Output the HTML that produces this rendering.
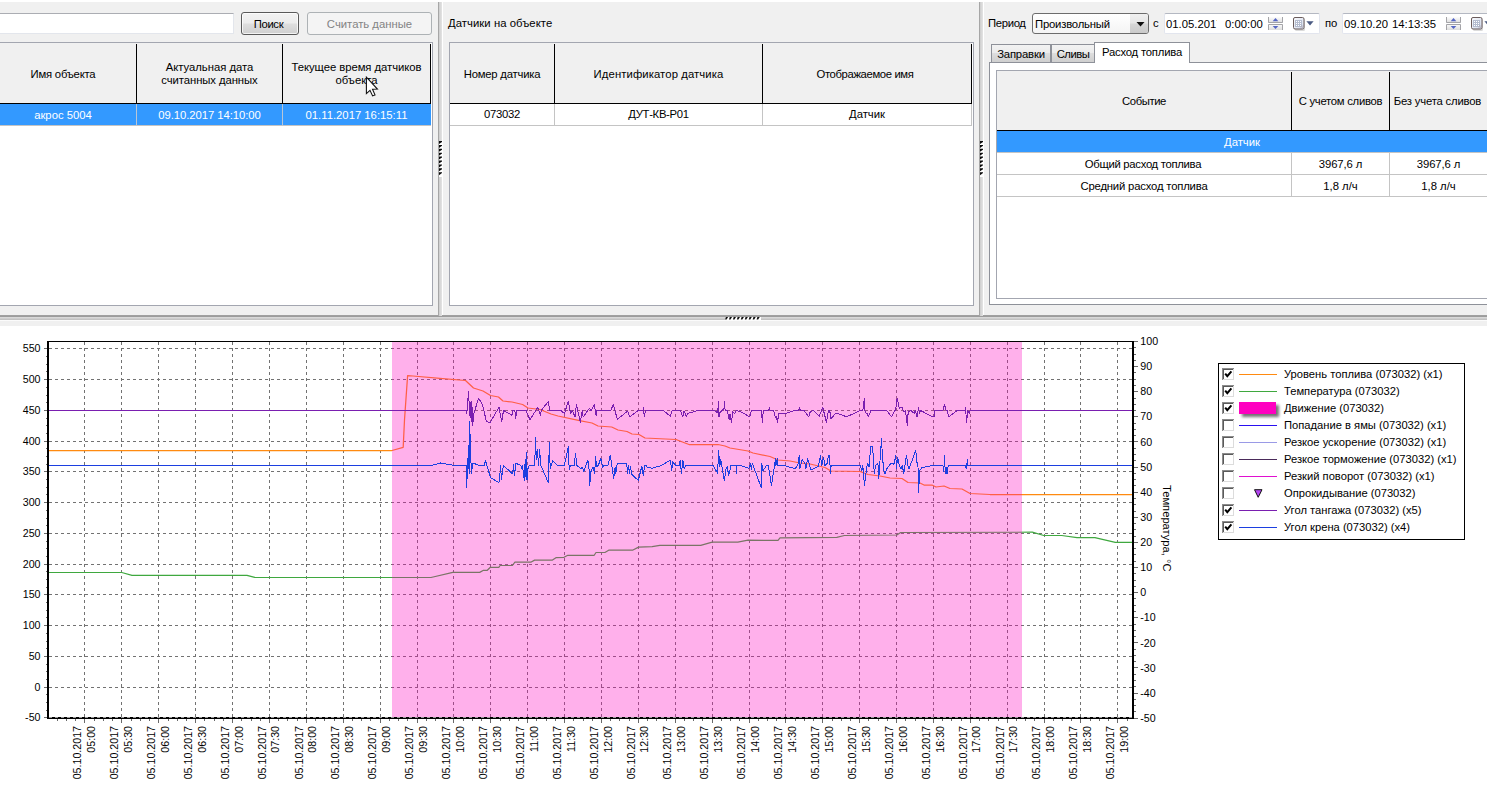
<!DOCTYPE html>
<html lang="ru"><head><meta charset="utf-8"><title>UI</title>
<style>
html,body{margin:0;padding:0;background:#fff;}
body{width:1487px;height:786px;position:relative;overflow:hidden;font-family:"Liberation Sans",sans-serif;font-size:11.3px;color:#000;}
.abs{position:absolute;}
.t{position:absolute;white-space:nowrap;line-height:14px;}
.c{text-align:center;}
#top{position:absolute;left:0;top:2px;width:1487px;height:324px;background:#f0f0f0;}
.frame{position:absolute;background:#fff;border:1px solid #a3a6b0;box-sizing:border-box;}
.hdr{position:absolute;background:#f0f0f0;}
.bk{position:absolute;background:#000;}
.gl{position:absolute;background:#c4c4c4;}
.sel{position:absolute;background:#3399ff;}
.w{color:#fff;}
.inp{position:absolute;background:#fff;box-sizing:border-box;border:1px solid #e3e6ec;border-top-color:#abadb3;}
.btn{position:absolute;box-sizing:border-box;border-radius:3px;text-align:center;}
</style></head>
<body>
<div id="top"></div>
<div class="inp" style="left:-2px;top:13px;width:236px;height:21px;"></div>
<div class="btn" style="left:241px;top:12px;width:58px;height:23px;border:1px solid #5a5a5a;background:linear-gradient(#f3f3f3 0%,#ececec 48%,#dedede 52%,#cfcfcf 100%);box-shadow:inset 0 0 0 1px rgba(255,255,255,.75);line-height:22px;padding-right:3px;letter-spacing:-0.360px;">Поиск</div>
<div class="btn" style="left:307px;top:12px;width:125px;height:23px;border:1px solid #adb2b5;background:#f4f4f4;color:#838383;line-height:22px;">Считать данные</div>
<div class="frame" style="left:-2px;top:42px;width:435px;height:264px;"></div>
<div class="hdr" style="left:0px;top:43px;width:431px;height:60px;"></div>
<div class="bk" style="left:0px;top:103px;width:431px;height:1px;"></div>
<div class="bk" style="left:136px;top:44px;width:1px;height:60px;"></div>
<div class="bk" style="left:282px;top:44px;width:1px;height:60px;"></div>
<div class="bk" style="left:430px;top:44px;width:1px;height:60px;"></div>
<div class="sel" style="left:0px;top:104px;width:431px;height:21px;"></div>
<div class="gl" style="left:0px;top:125px;width:431px;height:1px;"></div>
<div class="gl" style="left:136px;top:104px;width:1px;height:22px;background:#b9c6d6;"></div>
<div class="gl" style="left:282px;top:104px;width:1px;height:22px;background:#b9c6d6;"></div>
<div class="t c " style="left:0px;top:67px;width:126px;letter-spacing:-0.227px;">Имя объекта</div>
<div class="t c " style="left:137px;top:60px;width:145px;letter-spacing:-0.027px;">Актуальная дата</div>
<div class="t c " style="left:137px;top:73px;width:145px;letter-spacing:-0.081px;">считанных данных</div>
<div class="t c " style="left:283px;top:60px;width:147px;letter-spacing:-0.050px;">Текущее время датчиков</div>
<div class="t c " style="left:283px;top:73px;width:147px;">объекта</div>
<div class="t c w" style="left:0px;top:108px;width:126px;">акрос 5004</div>
<div class="t c w" style="left:137px;top:108px;width:145px;letter-spacing:-0.068px;">09.10.2017 14:10:00</div>
<div class="t c w" style="left:283px;top:108px;width:147px;">01.11.2017 16:15:11</div>
<div class="abs" style="left:438px;top:2px;width:1px;height:314px;background:#a6a6a6;"></div>
<div class="abs" style="left:439px;top:2px;width:3px;height:314px;background:linear-gradient(90deg,#cecece,#e4e4e4);"></div>
<div class="abs" style="left:442px;top:2px;width:1px;height:313px;background:#fff;"></div>
<div class="abs" style="left:979px;top:2px;width:1px;height:314px;background:#a6a6a6;"></div>
<div class="abs" style="left:980px;top:2px;width:3px;height:314px;background:linear-gradient(90deg,#cecece,#e4e4e4);"></div>
<div class="abs" style="left:983px;top:2px;width:1px;height:313px;background:#fff;"></div>
<div class="abs" style="left:0px;top:315px;width:438px;height:1px;background:#a0a0a0;"></div>
<div class="abs" style="left:442px;top:315px;width:537px;height:1px;background:#a0a0a0;"></div>
<div class="abs" style="left:983px;top:315px;width:504px;height:1px;background:#a0a0a0;"></div>
<div class="abs" style="left:0px;top:316px;width:1487px;height:1px;background:#9c9c9c;"></div>
<div class="abs" style="left:0px;top:317px;width:1487px;height:3px;background:linear-gradient(#dedede,#bcbcbc);"></div>
<div class="abs" style="left:0px;top:320px;width:1487px;height:1px;background:#fbfbfb;"></div>
<div class="abs" style="left:725px;top:317px;width:36px;height:3px;background:#fff;"></div>
<svg class="abs" style="left:439px;top:141px" width="3" height="36" viewBox="0 0 3 36"><rect width="3" height="36" fill="#fff"/><g fill="#0a0a0a"><path d="M0 0.00 h3 v0.9 l-3 2.1 z"/><path d="M0 3.90 h3 v0.9 l-3 2.1 z"/><path d="M0 7.80 h3 v0.9 l-3 2.1 z"/><path d="M0 11.70 h3 v0.9 l-3 2.1 z"/><path d="M0 15.60 h3 v0.9 l-3 2.1 z"/><path d="M0 19.50 h3 v0.9 l-3 2.1 z"/><path d="M0 23.40 h3 v0.9 l-3 2.1 z"/><path d="M0 27.30 h3 v0.9 l-3 2.1 z"/><path d="M0 31.20 h3 v0.9 l-3 2.1 z"/></g></svg>
<svg class="abs" style="left:980px;top:141px" width="3" height="36" viewBox="0 0 3 36"><rect width="3" height="36" fill="#fff"/><g fill="#0a0a0a"><path d="M0 0.00 h3 v0.9 l-3 2.1 z"/><path d="M0 3.90 h3 v0.9 l-3 2.1 z"/><path d="M0 7.80 h3 v0.9 l-3 2.1 z"/><path d="M0 11.70 h3 v0.9 l-3 2.1 z"/><path d="M0 15.60 h3 v0.9 l-3 2.1 z"/><path d="M0 19.50 h3 v0.9 l-3 2.1 z"/><path d="M0 23.40 h3 v0.9 l-3 2.1 z"/><path d="M0 27.30 h3 v0.9 l-3 2.1 z"/><path d="M0 31.20 h3 v0.9 l-3 2.1 z"/></g></svg>
<svg class="abs" style="left:725px;top:317px" width="36" height="4" viewBox="0 0 36 4" fill="#111"><path d="M0.80 0 h2.3 l-1.5 2.6 h-1.6 z"/><path d="M4.75 0 h2.3 l-1.5 2.6 h-1.6 z"/><path d="M8.70 0 h2.3 l-1.5 2.6 h-1.6 z"/><path d="M12.65 0 h2.3 l-1.5 2.6 h-1.6 z"/><path d="M16.60 0 h2.3 l-1.5 2.6 h-1.6 z"/><path d="M20.55 0 h2.3 l-1.5 2.6 h-1.6 z"/><path d="M24.50 0 h2.3 l-1.5 2.6 h-1.6 z"/><path d="M28.45 0 h2.3 l-1.5 2.6 h-1.6 z"/><path d="M32.40 0 h2.3 l-1.5 2.6 h-1.6 z"/></svg>
<div class="t " style="left:448px;top:16px;letter-spacing:0.056px;">Датчики на объекте</div>
<div class="frame" style="left:449px;top:42px;width:525px;height:264px;"></div>
<div class="hdr" style="left:450px;top:43px;width:522px;height:60px;"></div>
<div class="bk" style="left:450px;top:103px;width:522px;height:1px;"></div>
<div class="bk" style="left:554px;top:44px;width:1px;height:60px;"></div>
<div class="gl" style="left:554px;top:104px;width:1px;height:22px;"></div>
<div class="bk" style="left:762px;top:44px;width:1px;height:60px;"></div>
<div class="gl" style="left:762px;top:104px;width:1px;height:22px;"></div>
<div class="bk" style="left:971px;top:44px;width:1px;height:60px;"></div>
<div class="gl" style="left:971px;top:104px;width:1px;height:22px;"></div>
<div class="gl" style="left:450px;top:125px;width:522px;height:1px;"></div>
<div class="t c " style="left:450px;top:67px;width:104px;letter-spacing:-0.215px;">Номер датчика</div>
<div class="t c " style="left:555px;top:67px;width:207px;letter-spacing:0.095px;">Идентификатор датчика</div>
<div class="t c " style="left:761px;top:67px;width:208px;letter-spacing:-0.375px;">Отображаемое имя</div>
<div class="t c " style="left:450px;top:107px;width:104px;letter-spacing:-0.250px;">073032</div>
<div class="t c " style="left:555px;top:107px;width:207px;letter-spacing:-0.300px;">ДУТ-КВ-Р01</div>
<div class="t c " style="left:763px;top:107px;width:208px;">Датчик</div>
<div class="t " style="left:988px;top:16px;letter-spacing:-0.333px;">Период</div>
<div class="abs" style="left:1032px;top:13px;width:117px;height:21px;box-sizing:border-box;border:1px solid #6c6c6c;border-radius:3px;background:linear-gradient(#fff,#f4f4f4);overflow:hidden;"><div class="abs" style="right:0;top:0;width:18px;height:19px;background:linear-gradient(#f0f0f0 0%,#e6e6e6 48%,#d6d6d6 52%,#cacaca 100%);"></div><svg class="abs" style="right:3px;top:8px" width="9" height="5" viewBox="0 0 9 5"><path d="M0.5 0 L8.5 0 L4.5 4.6 Z" fill="#111"/></svg><div class="t" style="left:2px;top:3px;letter-spacing:-0.200px;">Произвольный</div></div>
<div class="t " style="left:1153px;top:16px;">с</div>
<div class="inp" style="left:1164px;top:13px;width:156px;height:21px;overflow:hidden;border-color:#e2e5ee;border-top-color:#b4b8c2;border-radius:2px;"><div class="t" style="left:1px;top:3px;width:51px;overflow:hidden;">01.05.2017</div><div class="t" style="left:60px;top:3px;">0:00:00</div><svg class="abs" style="left:103px;top:3px" width="16" height="14" viewBox="0 0 16 14"><defs><linearGradient id="sgd1164" x1="0" y1="0" x2="0" y2="1"><stop offset="0" stop-color="#fdfdfd"/><stop offset="1" stop-color="#dcdcdc"/></linearGradient></defs><rect x="0" y="0" width="15" height="6" fill="url(#sgd1164)"/><rect x="0" y="7" width="15" height="6" fill="url(#sgd1164)"/><path d="M0.5 0 V5.5 H14.5 V0 M0.5 13 V7.5 H14.5 V13" fill="none" stroke="#a4a4a8" stroke-width="1"/><path d="M7.5 0.9 L10.3 4.2 L4.7 4.2 Z" fill="#5566c4"/><path d="M7.5 12.1 L10.3 8.9 L4.7 8.9 Z" fill="#5566c4"/></svg><svg class="abs" style="left:128px;top:2px" width="24" height="16" viewBox="0 0 24 16"><defs><linearGradient id="cgd1164" x1="0" y1="0" x2="1" y2="1"><stop offset="0" stop-color="#fafafc"/><stop offset="1" stop-color="#cfd8ea"/></linearGradient></defs><rect x="2" y="3" width="10" height="12" rx="1.5" fill="#999" opacity="0.35"/><rect x="0.5" y="1.5" width="10.5" height="11.5" rx="1.5" fill="url(#cgd1164)" stroke="#6a5c5c"/><g shape-rendering="crispEdges"><rect x="2" y="4" width="7" height="7" fill="#b4bccf"/><path d="M3 5h1v1h-1zM5 5h1v1h-1zM7 5h1v1h-1zM3 7h1v1h-1zM5 7h1v1h-1zM7 7h1v1h-1zM3 9h1v1h-1zM5 9h1v1h-1zM7 9h1v1h-1z" fill="#fff"/></g><path d="M8.2 12.8 L10.8 10.2 L8.2 10.2 Z" fill="#eef1f8" stroke="#8a8090" stroke-width="0.5"/><path d="M13.4 5.2 L20.6 5.2 L17 9.4 Z" fill="#4a5a82"/></svg></div>
<div class="t " style="left:1325px;top:16px;">по</div>
<div class="inp" style="left:1342px;top:13px;width:160px;height:21px;overflow:hidden;border-color:#e2e5ee;border-top-color:#b4b8c2;border-radius:2px;"><div class="t" style="left:1px;top:3px;width:44px;overflow:hidden;">09.10.2017</div><div class="t" style="left:49px;top:3px;">14:13:35</div><svg class="abs" style="left:103px;top:3px" width="16" height="14" viewBox="0 0 16 14"><defs><linearGradient id="sgd1342" x1="0" y1="0" x2="0" y2="1"><stop offset="0" stop-color="#fdfdfd"/><stop offset="1" stop-color="#dcdcdc"/></linearGradient></defs><rect x="0" y="0" width="15" height="6" fill="url(#sgd1342)"/><rect x="0" y="7" width="15" height="6" fill="url(#sgd1342)"/><path d="M0.5 0 V5.5 H14.5 V0 M0.5 13 V7.5 H14.5 V13" fill="none" stroke="#a4a4a8" stroke-width="1"/><path d="M7.5 0.9 L10.3 4.2 L4.7 4.2 Z" fill="#5566c4"/><path d="M7.5 12.1 L10.3 8.9 L4.7 8.9 Z" fill="#5566c4"/></svg><svg class="abs" style="left:128px;top:2px" width="24" height="16" viewBox="0 0 24 16"><defs><linearGradient id="cgd1342" x1="0" y1="0" x2="1" y2="1"><stop offset="0" stop-color="#fafafc"/><stop offset="1" stop-color="#cfd8ea"/></linearGradient></defs><rect x="2" y="3" width="10" height="12" rx="1.5" fill="#999" opacity="0.35"/><rect x="0.5" y="1.5" width="10.5" height="11.5" rx="1.5" fill="url(#cgd1342)" stroke="#6a5c5c"/><g shape-rendering="crispEdges"><rect x="2" y="4" width="7" height="7" fill="#b4bccf"/><path d="M3 5h1v1h-1zM5 5h1v1h-1zM7 5h1v1h-1zM3 7h1v1h-1zM5 7h1v1h-1zM7 7h1v1h-1zM3 9h1v1h-1zM5 9h1v1h-1zM7 9h1v1h-1z" fill="#fff"/></g><path d="M8.2 12.8 L10.8 10.2 L8.2 10.2 Z" fill="#eef1f8" stroke="#8a8090" stroke-width="0.5"/><path d="M13.4 5.2 L20.6 5.2 L17 9.4 Z" fill="#4a5a82"/></svg></div>
<div class="abs" style="left:989px;top:62px;width:500px;height:243px;box-sizing:border-box;border:1px solid #8e9199;background:#fff;"></div>
<div class="abs" style="left:991px;top:44px;width:60px;height:18px;box-sizing:border-box;border:1px solid #8e9199;border-bottom:none;background:linear-gradient(#f2f2f2 0%,#ebebeb 50%,#dddddd 50%,#cfcfcf 100%);text-align:center;line-height:19px;letter-spacing:-0.175px;">Заправки</div>
<div class="abs" style="left:1051px;top:44px;width:44px;height:18px;box-sizing:border-box;border:1px solid #8e9199;border-bottom:none;background:linear-gradient(#f2f2f2 0%,#ebebeb 50%,#dddddd 50%,#cfcfcf 100%);text-align:center;line-height:19px;letter-spacing:-0.500px;">Сливы</div>
<div class="abs" style="left:1094px;top:42px;width:96px;height:21px;box-sizing:border-box;border:1px solid #8e9199;border-bottom:none;background:#fff;text-align:center;line-height:18px;letter-spacing:-0.200px;">Расход топлива</div>
<div class="frame" style="left:996px;top:70px;width:493px;height:229px;"></div>
<div class="hdr" style="left:997px;top:71px;width:490px;height:59px;"></div>
<div class="bk" style="left:997px;top:130px;width:490px;height:1px;"></div>
<div class="bk" style="left:1291px;top:72px;width:1px;height:59px;"></div>
<div class="bk" style="left:1389px;top:72px;width:1px;height:59px;"></div>
<div class="sel" style="left:997px;top:131px;width:490px;height:21px;"></div>
<div class="gl" style="left:997px;top:152px;width:490px;height:1px;"></div>
<div class="gl" style="left:997px;top:174px;width:490px;height:1px;"></div>
<div class="gl" style="left:997px;top:196px;width:490px;height:1px;"></div>
<div class="gl" style="left:1291px;top:153px;width:1px;height:44px;"></div>
<div class="gl" style="left:1389px;top:153px;width:1px;height:44px;"></div>
<div class="t c " style="left:997px;top:94px;width:294px;letter-spacing:-0.400px;">Событие</div>
<div class="t c " style="left:1292px;top:94px;width:97px;letter-spacing:-0.267px;">С учетом сливов</div>
<div class="t c " style="left:1389px;top:94px;width:97px;letter-spacing:-0.188px;">Без учета сливов</div>
<div class="t c w" style="left:997px;top:135px;width:490px;">Датчик</div>
<div class="t c " style="left:996px;top:157px;width:294px;letter-spacing:-0.300px;">Общий расход топлива</div>
<div class="t c " style="left:1292px;top:157px;width:97px;letter-spacing:-0.125px;">3967,6 л</div>
<div class="t c " style="left:1390px;top:157px;width:97px;letter-spacing:-0.125px;">3967,6 л</div>
<div class="t c " style="left:997px;top:179px;width:294px;letter-spacing:-0.182px;">Средний расход топлива</div>
<div class="t c " style="left:1292px;top:179px;width:97px;">1,8 л/ч</div>
<div class="t c " style="left:1390px;top:179px;width:97px;">1,8 л/ч</div>
<svg class="abs" style="left:365px;top:76px" width="15" height="22" viewBox="0 0 15 22"><path d="M1.4 1.2 L1.4 17.6 L5 14.3 L7.6 19.9 L10 18.9 L7.5 13.2 L12.4 13 Z" fill="#fff" stroke="#111" stroke-width="1.1" stroke-linejoin="miter"/></svg>
<svg class="abs" style="left:0;top:326px" width="1487" height="460" viewBox="0 326 1487 460" font-family="Liberation Sans, sans-serif" font-size="10.67">
<rect x="0" y="326" width="1487" height="460" fill="#fff"/>
<g stroke="#727272" stroke-width="1" stroke-dasharray="3 3" shape-rendering="crispEdges">
<line x1="84.5" y1="342" x2="84.5" y2="717"/>
<line x1="121.5" y1="342" x2="121.5" y2="717"/>
<line x1="158.5" y1="342" x2="158.5" y2="717"/>
<line x1="195.5" y1="342" x2="195.5" y2="717"/>
<line x1="232.5" y1="342" x2="232.5" y2="717"/>
<line x1="269.5" y1="342" x2="269.5" y2="717"/>
<line x1="306.5" y1="342" x2="306.5" y2="717"/>
<line x1="343.5" y1="342" x2="343.5" y2="717"/>
<line x1="380.5" y1="342" x2="380.5" y2="717"/>
<line x1="417.5" y1="342" x2="417.5" y2="717"/>
<line x1="453.5" y1="342" x2="453.5" y2="717"/>
<line x1="490.5" y1="342" x2="490.5" y2="717"/>
<line x1="527.5" y1="342" x2="527.5" y2="717"/>
<line x1="564.5" y1="342" x2="564.5" y2="717"/>
<line x1="601.5" y1="342" x2="601.5" y2="717"/>
<line x1="638.5" y1="342" x2="638.5" y2="717"/>
<line x1="675.5" y1="342" x2="675.5" y2="717"/>
<line x1="712.5" y1="342" x2="712.5" y2="717"/>
<line x1="749.5" y1="342" x2="749.5" y2="717"/>
<line x1="785.5" y1="342" x2="785.5" y2="717"/>
<line x1="822.5" y1="342" x2="822.5" y2="717"/>
<line x1="859.5" y1="342" x2="859.5" y2="717"/>
<line x1="896.5" y1="342" x2="896.5" y2="717"/>
<line x1="933.5" y1="342" x2="933.5" y2="717"/>
<line x1="970.5" y1="342" x2="970.5" y2="717"/>
<line x1="1007.5" y1="342" x2="1007.5" y2="717"/>
<line x1="1044.5" y1="342" x2="1044.5" y2="717"/>
<line x1="1080.5" y1="342" x2="1080.5" y2="717"/>
<line x1="1117.5" y1="342" x2="1117.5" y2="717"/>
<line x1="49" y1="717.5" x2="1132" y2="717.5"/>
<line x1="49" y1="687.5" x2="1132" y2="687.5"/>
<line x1="49" y1="656.5" x2="1132" y2="656.5"/>
<line x1="49" y1="625.5" x2="1132" y2="625.5"/>
<line x1="49" y1="594.5" x2="1132" y2="594.5"/>
<line x1="49" y1="564.5" x2="1132" y2="564.5"/>
<line x1="49" y1="533.5" x2="1132" y2="533.5"/>
<line x1="49" y1="502.5" x2="1132" y2="502.5"/>
<line x1="49" y1="471.5" x2="1132" y2="471.5"/>
<line x1="49" y1="441.5" x2="1132" y2="441.5"/>
<line x1="49" y1="410.5" x2="1132" y2="410.5"/>
<line x1="49" y1="379.5" x2="1132" y2="379.5"/>
<line x1="49" y1="348.5" x2="1132" y2="348.5"/>
</g>
<polyline points="48.0,450.5 392.0,450.5 403.2,447.3 404.5,420.0 407.6,375.7 413.0,376.0 440.0,378.3 465.5,380.5 473.5,388.0 483.0,391.0 490.5,395.5 498.5,397.0 503.0,401.0 512.0,402.0 522.6,404.5 528.0,408.0 540.0,409.5 551.0,414.0 558.0,416.0 579.6,420.6 592.0,423.0 598.0,426.0 611.7,427.0 618.0,430.0 627.0,431.5 632.0,434.0 639.0,434.5 645.0,438.0 676.0,439.5 685.0,443.0 689.0,444.5 718.0,444.5 725.0,446.0 730.0,448.0 748.0,451.0 753.0,453.0 770.0,456.5 778.0,460.0 790.0,461.0 800.0,463.0 810.0,464.0 825.0,467.5 831.0,471.0 860.0,471.5 868.0,474.5 880.0,476.0 890.0,478.0 902.0,478.5 908.0,482.5 920.0,483.0 924.0,485.0 932.0,485.0 936.0,487.0 944.0,486.0 950.0,488.5 962.0,489.0 970.0,493.5 990.0,494.5 1132.0,494.5" fill="none" stroke="#ff8a10" stroke-width="1.25" stroke-linejoin="round"/>
<polyline points="48.0,572.5 121.8,572.5 132.0,575.3 247.0,575.3 254.7,577.3 431.0,577.5 452.8,572.4 479.7,572.4 483.5,570.3 487.3,570.3 490.4,567.3 498.8,567.3 500.1,565.5 512.4,565.5 514.9,562.2 530.8,562.2 534.6,560.1 552.5,560.1 556.3,557.6 564.0,557.3 567.8,555.3 594.2,555.3 596.0,552.5 604.9,552.5 608.7,550.2 632.5,550.2 638.6,547.1 652.2,546.6 659.8,545.3 700.7,545.3 712.2,542.2 737.8,542.2 748.0,540.2 778.0,540.4 780.0,537.8 836.8,537.3 844.4,535.5 896.8,535.0 900.7,532.5 1032.3,532.2 1043.8,535.5 1061.7,535.5 1077.0,537.6 1094.9,537.6 1115.3,542.4 1132.0,542.4" fill="none" stroke="#3fa83f" stroke-width="1.2" stroke-linejoin="round"/>
<rect x="392" y="342" width="630" height="375" fill="#ff00c0" fill-opacity="0.31"/>
<polyline points="48.0,410.5 466.4,410.5 466.8,413.6 468.6,391.3 469.6,415.1 470.3,402.1 471.2,422.1 471.8,401.1 472.7,425.1 473.9,413.6 478.5,398.1 482.5,404.6 486.4,421.6 490.0,422.5 499.0,407.3 501.7,421.6 503.5,410.5 511.9,415.3 512.7,410.5 514.9,410.5 515.8,418.9 516.5,410.5 526.1,410.5 530.0,419.8 537.7,407.3 540.4,415.3 541.2,410.5 548.4,401.4 549.6,410.5 560.8,410.5 564.4,413.6 568.3,401.4 570.6,413.6 572.4,410.5 575.1,417.1 576.4,404.6 580.4,422.5 582.2,410.5 583.1,417.1 589.4,408.2 591.1,410.5 594.3,404.6 596.1,415.3 597.0,410.5 610.7,410.5 613.4,404.6 617.3,419.4 627.6,411.2 629.9,416.8 638.3,410.5 642.8,410.5 643.7,407.3 644.2,417.1 645.4,410.5 663.3,410.5 670.4,416.2 672.2,410.5 680.2,410.5 682.9,416.8 684.1,410.9 686.4,416.8 687.3,413.6 698.0,410.5 714.0,410.5 717.6,412.7 718.7,401.1 719.0,416.8 719.7,412.7 724.4,408.2 724.5,401.4 725.1,410.5 727.4,410.5 729.2,419.8 730.0,413.6 731.5,422.8 732.7,411.8 734.5,413.6 736.3,410.5 740.8,411.8 749.7,416.8 751.5,410.5 761.3,410.5 762.5,422.5 763.2,410.5 768.4,410.5 769.6,407.9 770.2,410.5 773.7,410.5 775.5,418.0 776.4,416.2 777.6,422.8 778.5,413.6 785.3,413.6 794.2,410.5 798.7,410.5 799.6,407.9 800.8,410.5 804.0,410.5 808.8,416.8 810.2,411.8 813.8,410.5 819.2,416.2 822.7,407.3 826.5,422.5 828.5,410.5 829.8,410.5 830.7,418.9 836.0,413.0 846.7,416.8 860.1,410.5 862.8,410.5 864.4,398.1 865.1,412.7 867.2,413.6 868.5,416.8 870.8,410.5 886.8,410.5 891.6,416.8 895.7,409.1 897.1,398.1 899.3,408.2 902.0,407.3 903.7,411.8 905.5,410.5 907.3,425.7 908.2,411.8 910.9,410.5 914.4,413.6 915.3,410.5 917.1,417.1 918.5,407.3 919.4,413.6 920.7,410.5 932.2,416.8 934.0,416.8 934.4,410.5 942.9,410.5 944.4,404.3 946.1,410.5 947.4,410.5 948.6,416.8 957.2,410.5 965.2,410.5 965.6,407.3 966.5,422.8 967.9,410.5 969.3,413.6 970.2,410.5 1132.0,410.5" fill="none" stroke="#7a1fb0" stroke-width="1" stroke-linejoin="round" shape-rendering="crispEdges"/>
<polyline points="48.0,465.5 431.7,465.5 440.6,463.0 454.8,465.5 466.1,465.5 466.6,487.9 468.6,445.5 469.1,474.0 469.6,421.5 470.5,449.0 471.4,473.7 472.7,463.0 479.8,465.5 484.2,465.5 485.5,460.7 490.5,477.6 499.0,482.6 500.8,465.5 501.2,479.4 503.5,465.5 512.7,474.0 513.6,464.2 514.5,475.8 515.8,463.3 520.8,465.5 521.6,468.7 522.5,465.5 524.3,480.3 525.2,459.8 526.1,479.4 526.6,452.7 527.3,479.4 528.2,466.9 529.7,465.5 534.7,465.5 535.5,438.0 536.4,459.8 537.2,449.1 538.6,465.1 539.5,449.1 540.9,465.5 548.4,482.9 549.3,442.8 550.2,468.7 552.8,460.7 557.3,465.5 564.4,465.5 568.3,446.4 569.2,469.6 570.3,465.5 574.2,465.5 575.5,453.5 576.9,465.5 581.3,468.7 582.2,466.9 584.0,471.4 587.6,460.7 588.8,463.3 589.7,485.6 591.1,470.5 592.9,466.9 594.7,473.1 595.6,456.2 596.5,466.9 598.3,465.5 600.9,458.0 602.7,467.8 603.6,465.5 608.0,465.5 610.3,455.3 613.7,478.5 615.1,466.9 615.7,474.0 617.3,463.3 626.7,463.3 627.6,473.1 628.5,465.1 629.4,474.0 630.3,466.9 632.1,474.9 638.3,480.3 641.9,466.0 643.3,475.8 644.5,465.5 646.0,465.5 646.7,466.9 651.7,468.3 661.5,465.5 670.4,460.1 671.8,470.5 672.5,461.6 675.7,465.5 679.3,465.5 680.2,460.1 681.4,473.7 682.9,460.1 684.1,468.7 685.5,465.5 713.1,465.5 717.6,473.1 718.7,450.5 719.7,466.9 720.8,459.8 724.4,480.8 726.1,468.7 727.4,466.9 728.6,475.8 731.0,465.5 736.3,465.5 736.7,474.0 737.0,465.5 740.8,465.5 748.8,468.3 750.6,463.3 751.4,469.6 752.3,463.3 761.2,487.4 761.8,463.3 763.0,470.5 766.6,465.5 768.4,465.5 771.4,485.6 775.5,458.9 776.0,465.5 777.3,458.9 777.8,465.5 784.4,465.5 795.1,468.7 797.8,465.1 799.2,455.3 799.9,468.7 802.2,459.8 804.9,463.3 805.8,468.7 807.6,458.9 811.1,470.1 818.3,466.5 820.6,455.3 821.5,465.5 823.6,457.1 824.9,465.5 827.2,463.3 828.4,455.3 829.3,455.3 830.7,473.7 831.1,465.5 860.1,465.5 861.9,470.5 862.8,465.5 864.5,485.6 866.7,466.9 867.7,463.3 869.0,466.9 870.8,446.4 872.6,446.4 874.3,474.0 875.6,465.5 877.9,463.3 878.8,478.5 881.5,438.4 882.4,456.2 883.8,470.5 885.0,473.7 886.8,468.7 891.3,463.0 893.9,464.2 895.7,455.3 896.6,468.7 897.5,457.1 899.3,465.5 901.1,468.7 902.3,465.1 903.7,473.7 906.4,455.3 908.2,466.9 909.1,468.7 915.7,450.5 917.1,463.3 918.0,466.9 918.5,492.7 919.8,470.5 921.6,467.8 932.2,465.5 942.9,465.5 943.8,471.4 944.4,455.3 945.3,473.1 946.1,466.9 947.0,473.7 948.3,465.5 965.2,465.5 966.1,468.7 967.5,459.8 967.9,465.5 1132.0,465.5" fill="none" stroke="#1c3fe0" stroke-width="1" stroke-linejoin="round" shape-rendering="crispEdges"/>
<g fill="#000" shape-rendering="crispEdges">
<rect x="47" y="341" width="2" height="378"/>
<rect x="47" y="717" width="1087" height="2"/>
<rect x="1132" y="341" width="2" height="378"/>
<rect x="47" y="341" width="1087" height="1"/>
</g>
<line x1="49" y1="717.5" x2="1132" y2="717.5" stroke="#9a9a9a" stroke-dasharray="3 3" shape-rendering="crispEdges"/>
<g stroke="#6a6a6a" stroke-width="1" shape-rendering="crispEdges">
<line x1="44" y1="717.5" x2="47" y2="717.5"/>
<line x1="44" y1="687.5" x2="47" y2="687.5"/>
<line x1="44" y1="656.5" x2="47" y2="656.5"/>
<line x1="44" y1="625.5" x2="47" y2="625.5"/>
<line x1="44" y1="594.5" x2="47" y2="594.5"/>
<line x1="44" y1="564.5" x2="47" y2="564.5"/>
<line x1="44" y1="533.5" x2="47" y2="533.5"/>
<line x1="44" y1="502.5" x2="47" y2="502.5"/>
<line x1="44" y1="471.5" x2="47" y2="471.5"/>
<line x1="44" y1="441.5" x2="47" y2="441.5"/>
<line x1="44" y1="410.5" x2="47" y2="410.5"/>
<line x1="44" y1="379.5" x2="47" y2="379.5"/>
<line x1="44" y1="348.5" x2="47" y2="348.5"/>
<line x1="46" y1="710.5" x2="47" y2="710.5"/>
<line x1="46" y1="702.5" x2="47" y2="702.5"/>
<line x1="46" y1="694.5" x2="47" y2="694.5"/>
<line x1="46" y1="679.5" x2="47" y2="679.5"/>
<line x1="46" y1="671.5" x2="47" y2="671.5"/>
<line x1="46" y1="664.5" x2="47" y2="664.5"/>
<line x1="46" y1="648.5" x2="47" y2="648.5"/>
<line x1="46" y1="641.5" x2="47" y2="641.5"/>
<line x1="46" y1="633.5" x2="47" y2="633.5"/>
<line x1="46" y1="617.5" x2="47" y2="617.5"/>
<line x1="46" y1="610.5" x2="47" y2="610.5"/>
<line x1="46" y1="602.5" x2="47" y2="602.5"/>
<line x1="46" y1="587.5" x2="47" y2="587.5"/>
<line x1="46" y1="579.5" x2="47" y2="579.5"/>
<line x1="46" y1="571.5" x2="47" y2="571.5"/>
<line x1="46" y1="556.5" x2="47" y2="556.5"/>
<line x1="46" y1="548.5" x2="47" y2="548.5"/>
<line x1="46" y1="541.5" x2="47" y2="541.5"/>
<line x1="46" y1="525.5" x2="47" y2="525.5"/>
<line x1="46" y1="518.5" x2="47" y2="518.5"/>
<line x1="46" y1="510.5" x2="47" y2="510.5"/>
<line x1="46" y1="494.5" x2="47" y2="494.5"/>
<line x1="46" y1="487.5" x2="47" y2="487.5"/>
<line x1="46" y1="479.5" x2="47" y2="479.5"/>
<line x1="46" y1="464.5" x2="47" y2="464.5"/>
<line x1="46" y1="456.5" x2="47" y2="456.5"/>
<line x1="46" y1="448.5" x2="47" y2="448.5"/>
<line x1="46" y1="433.5" x2="47" y2="433.5"/>
<line x1="46" y1="425.5" x2="47" y2="425.5"/>
<line x1="46" y1="418.5" x2="47" y2="418.5"/>
<line x1="46" y1="402.5" x2="47" y2="402.5"/>
<line x1="46" y1="395.5" x2="47" y2="395.5"/>
<line x1="46" y1="387.5" x2="47" y2="387.5"/>
<line x1="46" y1="371.5" x2="47" y2="371.5"/>
<line x1="46" y1="364.5" x2="47" y2="364.5"/>
<line x1="46" y1="356.5" x2="47" y2="356.5"/>
<line x1="1134" y1="718.5" x2="1138" y2="718.5"/>
<line x1="1134" y1="693.5" x2="1138" y2="693.5"/>
<line x1="1134" y1="667.5" x2="1138" y2="667.5"/>
<line x1="1134" y1="642.5" x2="1138" y2="642.5"/>
<line x1="1134" y1="617.5" x2="1138" y2="617.5"/>
<line x1="1134" y1="592.5" x2="1138" y2="592.5"/>
<line x1="1134" y1="567.5" x2="1138" y2="567.5"/>
<line x1="1134" y1="542.5" x2="1138" y2="542.5"/>
<line x1="1134" y1="517.5" x2="1138" y2="517.5"/>
<line x1="1134" y1="492.5" x2="1138" y2="492.5"/>
<line x1="1134" y1="467.5" x2="1138" y2="467.5"/>
<line x1="1134" y1="441.5" x2="1138" y2="441.5"/>
<line x1="1134" y1="416.5" x2="1138" y2="416.5"/>
<line x1="1134" y1="391.5" x2="1138" y2="391.5"/>
<line x1="1134" y1="366.5" x2="1138" y2="366.5"/>
<line x1="1134" y1="341.5" x2="1138" y2="341.5"/>
<line x1="1134" y1="711.5" x2="1136" y2="711.5"/>
<line x1="1134" y1="705.5" x2="1136" y2="705.5"/>
<line x1="1134" y1="699.5" x2="1136" y2="699.5"/>
<line x1="1134" y1="686.5" x2="1136" y2="686.5"/>
<line x1="1134" y1="680.5" x2="1136" y2="680.5"/>
<line x1="1134" y1="674.5" x2="1136" y2="674.5"/>
<line x1="1134" y1="661.5" x2="1136" y2="661.5"/>
<line x1="1134" y1="655.5" x2="1136" y2="655.5"/>
<line x1="1134" y1="649.5" x2="1136" y2="649.5"/>
<line x1="1134" y1="636.5" x2="1136" y2="636.5"/>
<line x1="1134" y1="630.5" x2="1136" y2="630.5"/>
<line x1="1134" y1="624.5" x2="1136" y2="624.5"/>
<line x1="1134" y1="611.5" x2="1136" y2="611.5"/>
<line x1="1134" y1="605.5" x2="1136" y2="605.5"/>
<line x1="1134" y1="598.5" x2="1136" y2="598.5"/>
<line x1="1134" y1="586.5" x2="1136" y2="586.5"/>
<line x1="1134" y1="580.5" x2="1136" y2="580.5"/>
<line x1="1134" y1="573.5" x2="1136" y2="573.5"/>
<line x1="1134" y1="561.5" x2="1136" y2="561.5"/>
<line x1="1134" y1="554.5" x2="1136" y2="554.5"/>
<line x1="1134" y1="548.5" x2="1136" y2="548.5"/>
<line x1="1134" y1="536.5" x2="1136" y2="536.5"/>
<line x1="1134" y1="529.5" x2="1136" y2="529.5"/>
<line x1="1134" y1="523.5" x2="1136" y2="523.5"/>
<line x1="1134" y1="511.5" x2="1136" y2="511.5"/>
<line x1="1134" y1="504.5" x2="1136" y2="504.5"/>
<line x1="1134" y1="498.5" x2="1136" y2="498.5"/>
<line x1="1134" y1="485.5" x2="1136" y2="485.5"/>
<line x1="1134" y1="479.5" x2="1136" y2="479.5"/>
<line x1="1134" y1="473.5" x2="1136" y2="473.5"/>
<line x1="1134" y1="460.5" x2="1136" y2="460.5"/>
<line x1="1134" y1="454.5" x2="1136" y2="454.5"/>
<line x1="1134" y1="448.5" x2="1136" y2="448.5"/>
<line x1="1134" y1="435.5" x2="1136" y2="435.5"/>
<line x1="1134" y1="429.5" x2="1136" y2="429.5"/>
<line x1="1134" y1="423.5" x2="1136" y2="423.5"/>
<line x1="1134" y1="410.5" x2="1136" y2="410.5"/>
<line x1="1134" y1="404.5" x2="1136" y2="404.5"/>
<line x1="1134" y1="398.5" x2="1136" y2="398.5"/>
<line x1="1134" y1="385.5" x2="1136" y2="385.5"/>
<line x1="1134" y1="379.5" x2="1136" y2="379.5"/>
<line x1="1134" y1="372.5" x2="1136" y2="372.5"/>
<line x1="1134" y1="360.5" x2="1136" y2="360.5"/>
<line x1="1134" y1="354.5" x2="1136" y2="354.5"/>
<line x1="1134" y1="347.5" x2="1136" y2="347.5"/>
<line x1="84.5" y1="719" x2="84.5" y2="723"/>
<line x1="121.5" y1="719" x2="121.5" y2="723"/>
<line x1="158.5" y1="719" x2="158.5" y2="723"/>
<line x1="195.5" y1="719" x2="195.5" y2="723"/>
<line x1="232.5" y1="719" x2="232.5" y2="723"/>
<line x1="269.5" y1="719" x2="269.5" y2="723"/>
<line x1="306.5" y1="719" x2="306.5" y2="723"/>
<line x1="343.5" y1="719" x2="343.5" y2="723"/>
<line x1="380.5" y1="719" x2="380.5" y2="723"/>
<line x1="417.5" y1="719" x2="417.5" y2="723"/>
<line x1="453.5" y1="719" x2="453.5" y2="723"/>
<line x1="490.5" y1="719" x2="490.5" y2="723"/>
<line x1="527.5" y1="719" x2="527.5" y2="723"/>
<line x1="564.5" y1="719" x2="564.5" y2="723"/>
<line x1="601.5" y1="719" x2="601.5" y2="723"/>
<line x1="638.5" y1="719" x2="638.5" y2="723"/>
<line x1="675.5" y1="719" x2="675.5" y2="723"/>
<line x1="712.5" y1="719" x2="712.5" y2="723"/>
<line x1="749.5" y1="719" x2="749.5" y2="723"/>
<line x1="785.5" y1="719" x2="785.5" y2="723"/>
<line x1="822.5" y1="719" x2="822.5" y2="723"/>
<line x1="859.5" y1="719" x2="859.5" y2="723"/>
<line x1="896.5" y1="719" x2="896.5" y2="723"/>
<line x1="933.5" y1="719" x2="933.5" y2="723"/>
<line x1="970.5" y1="719" x2="970.5" y2="723"/>
<line x1="1007.5" y1="719" x2="1007.5" y2="723"/>
<line x1="1044.5" y1="719" x2="1044.5" y2="723"/>
<line x1="1080.5" y1="719" x2="1080.5" y2="723"/>
<line x1="1117.5" y1="719" x2="1117.5" y2="723"/>
<line x1="57.5" y1="719" x2="57.5" y2="721"/>
<line x1="66.5" y1="719" x2="66.5" y2="721"/>
<line x1="75.5" y1="719" x2="75.5" y2="721"/>
<line x1="94.5" y1="719" x2="94.5" y2="721"/>
<line x1="103.5" y1="719" x2="103.5" y2="721"/>
<line x1="112.5" y1="719" x2="112.5" y2="721"/>
<line x1="131.5" y1="719" x2="131.5" y2="721"/>
<line x1="140.5" y1="719" x2="140.5" y2="721"/>
<line x1="149.5" y1="719" x2="149.5" y2="721"/>
<line x1="168.5" y1="719" x2="168.5" y2="721"/>
<line x1="177.5" y1="719" x2="177.5" y2="721"/>
<line x1="186.5" y1="719" x2="186.5" y2="721"/>
<line x1="204.5" y1="719" x2="204.5" y2="721"/>
<line x1="214.5" y1="719" x2="214.5" y2="721"/>
<line x1="223.5" y1="719" x2="223.5" y2="721"/>
<line x1="241.5" y1="719" x2="241.5" y2="721"/>
<line x1="251.5" y1="719" x2="251.5" y2="721"/>
<line x1="260.5" y1="719" x2="260.5" y2="721"/>
<line x1="278.5" y1="719" x2="278.5" y2="721"/>
<line x1="287.5" y1="719" x2="287.5" y2="721"/>
<line x1="297.5" y1="719" x2="297.5" y2="721"/>
<line x1="315.5" y1="719" x2="315.5" y2="721"/>
<line x1="324.5" y1="719" x2="324.5" y2="721"/>
<line x1="334.5" y1="719" x2="334.5" y2="721"/>
<line x1="352.5" y1="719" x2="352.5" y2="721"/>
<line x1="361.5" y1="719" x2="361.5" y2="721"/>
<line x1="370.5" y1="719" x2="370.5" y2="721"/>
<line x1="389.5" y1="719" x2="389.5" y2="721"/>
<line x1="398.5" y1="719" x2="398.5" y2="721"/>
<line x1="407.5" y1="719" x2="407.5" y2="721"/>
<line x1="426.5" y1="719" x2="426.5" y2="721"/>
<line x1="435.5" y1="719" x2="435.5" y2="721"/>
<line x1="444.5" y1="719" x2="444.5" y2="721"/>
<line x1="463.5" y1="719" x2="463.5" y2="721"/>
<line x1="472.5" y1="719" x2="472.5" y2="721"/>
<line x1="481.5" y1="719" x2="481.5" y2="721"/>
<line x1="500.5" y1="719" x2="500.5" y2="721"/>
<line x1="509.5" y1="719" x2="509.5" y2="721"/>
<line x1="518.5" y1="719" x2="518.5" y2="721"/>
<line x1="536.5" y1="719" x2="536.5" y2="721"/>
<line x1="546.5" y1="719" x2="546.5" y2="721"/>
<line x1="555.5" y1="719" x2="555.5" y2="721"/>
<line x1="573.5" y1="719" x2="573.5" y2="721"/>
<line x1="583.5" y1="719" x2="583.5" y2="721"/>
<line x1="592.5" y1="719" x2="592.5" y2="721"/>
<line x1="610.5" y1="719" x2="610.5" y2="721"/>
<line x1="619.5" y1="719" x2="619.5" y2="721"/>
<line x1="629.5" y1="719" x2="629.5" y2="721"/>
<line x1="647.5" y1="719" x2="647.5" y2="721"/>
<line x1="656.5" y1="719" x2="656.5" y2="721"/>
<line x1="666.5" y1="719" x2="666.5" y2="721"/>
<line x1="684.5" y1="719" x2="684.5" y2="721"/>
<line x1="693.5" y1="719" x2="693.5" y2="721"/>
<line x1="702.5" y1="719" x2="702.5" y2="721"/>
<line x1="721.5" y1="719" x2="721.5" y2="721"/>
<line x1="730.5" y1="719" x2="730.5" y2="721"/>
<line x1="739.5" y1="719" x2="739.5" y2="721"/>
<line x1="758.5" y1="719" x2="758.5" y2="721"/>
<line x1="767.5" y1="719" x2="767.5" y2="721"/>
<line x1="776.5" y1="719" x2="776.5" y2="721"/>
<line x1="795.5" y1="719" x2="795.5" y2="721"/>
<line x1="804.5" y1="719" x2="804.5" y2="721"/>
<line x1="813.5" y1="719" x2="813.5" y2="721"/>
<line x1="832.5" y1="719" x2="832.5" y2="721"/>
<line x1="841.5" y1="719" x2="841.5" y2="721"/>
<line x1="850.5" y1="719" x2="850.5" y2="721"/>
<line x1="868.5" y1="719" x2="868.5" y2="721"/>
<line x1="878.5" y1="719" x2="878.5" y2="721"/>
<line x1="887.5" y1="719" x2="887.5" y2="721"/>
<line x1="905.5" y1="719" x2="905.5" y2="721"/>
<line x1="915.5" y1="719" x2="915.5" y2="721"/>
<line x1="924.5" y1="719" x2="924.5" y2="721"/>
<line x1="942.5" y1="719" x2="942.5" y2="721"/>
<line x1="951.5" y1="719" x2="951.5" y2="721"/>
<line x1="961.5" y1="719" x2="961.5" y2="721"/>
<line x1="979.5" y1="719" x2="979.5" y2="721"/>
<line x1="988.5" y1="719" x2="988.5" y2="721"/>
<line x1="998.5" y1="719" x2="998.5" y2="721"/>
<line x1="1016.5" y1="719" x2="1016.5" y2="721"/>
<line x1="1025.5" y1="719" x2="1025.5" y2="721"/>
<line x1="1034.5" y1="719" x2="1034.5" y2="721"/>
<line x1="1053.5" y1="719" x2="1053.5" y2="721"/>
<line x1="1062.5" y1="719" x2="1062.5" y2="721"/>
<line x1="1071.5" y1="719" x2="1071.5" y2="721"/>
<line x1="1090.5" y1="719" x2="1090.5" y2="721"/>
<line x1="1099.5" y1="719" x2="1099.5" y2="721"/>
<line x1="1108.5" y1="719" x2="1108.5" y2="721"/>
<line x1="1127.5" y1="719" x2="1127.5" y2="721"/>
</g>
<g fill="#000">
<text x="40.5" y="721.4" text-anchor="end">-50</text>
<text x="40.5" y="690.6" text-anchor="end">0</text>
<text x="40.5" y="659.9" text-anchor="end">50</text>
<text x="40.5" y="629.1" text-anchor="end">100</text>
<text x="40.5" y="598.4" text-anchor="end">150</text>
<text x="40.5" y="567.6" text-anchor="end">200</text>
<text x="40.5" y="536.9" text-anchor="end">250</text>
<text x="40.5" y="506.1" text-anchor="end">300</text>
<text x="40.5" y="475.4" text-anchor="end">350</text>
<text x="40.5" y="444.6" text-anchor="end">400</text>
<text x="40.5" y="413.9" text-anchor="end">450</text>
<text x="40.5" y="383.1" text-anchor="end">500</text>
<text x="40.5" y="352.4" text-anchor="end">550</text>
<text x="1140.3" y="721.8">-50</text>
<text x="1140.3" y="696.7">-40</text>
<text x="1140.3" y="671.6">-30</text>
<text x="1140.3" y="646.5">-20</text>
<text x="1140.3" y="621.3">-10</text>
<text x="1140.3" y="596.2">0</text>
<text x="1140.3" y="571.1">10</text>
<text x="1140.3" y="546.0">20</text>
<text x="1140.3" y="520.9">30</text>
<text x="1140.3" y="495.8">40</text>
<text x="1140.3" y="470.7">50</text>
<text x="1140.3" y="445.6">60</text>
<text x="1140.3" y="420.4">70</text>
<text x="1140.3" y="395.3">80</text>
<text x="1140.3" y="370.2">90</text>
<text x="1140.3" y="345.1">100</text>
<text transform="translate(81.2,726) rotate(-90)" text-anchor="end">05.10.2017</text>
<text transform="translate(95.0,726) rotate(-90)" text-anchor="end">05:00</text>
<text transform="translate(118.1,726) rotate(-90)" text-anchor="end">05.10.2017</text>
<text transform="translate(131.9,726) rotate(-90)" text-anchor="end">05:30</text>
<text transform="translate(155.0,726) rotate(-90)" text-anchor="end">05.10.2017</text>
<text transform="translate(168.8,726) rotate(-90)" text-anchor="end">06:00</text>
<text transform="translate(191.9,726) rotate(-90)" text-anchor="end">05.10.2017</text>
<text transform="translate(205.7,726) rotate(-90)" text-anchor="end">06:30</text>
<text transform="translate(228.8,726) rotate(-90)" text-anchor="end">05.10.2017</text>
<text transform="translate(242.6,726) rotate(-90)" text-anchor="end">07:00</text>
<text transform="translate(265.6,726) rotate(-90)" text-anchor="end">05.10.2017</text>
<text transform="translate(279.4,726) rotate(-90)" text-anchor="end">07:30</text>
<text transform="translate(302.5,726) rotate(-90)" text-anchor="end">05.10.2017</text>
<text transform="translate(316.3,726) rotate(-90)" text-anchor="end">08:00</text>
<text transform="translate(339.4,726) rotate(-90)" text-anchor="end">05.10.2017</text>
<text transform="translate(353.2,726) rotate(-90)" text-anchor="end">08:30</text>
<text transform="translate(376.3,726) rotate(-90)" text-anchor="end">05.10.2017</text>
<text transform="translate(390.1,726) rotate(-90)" text-anchor="end">09:00</text>
<text transform="translate(413.2,726) rotate(-90)" text-anchor="end">05.10.2017</text>
<text transform="translate(427.0,726) rotate(-90)" text-anchor="end">09:30</text>
<text transform="translate(450.1,726) rotate(-90)" text-anchor="end">05.10.2017</text>
<text transform="translate(463.9,726) rotate(-90)" text-anchor="end">10:00</text>
<text transform="translate(487.0,726) rotate(-90)" text-anchor="end">05.10.2017</text>
<text transform="translate(500.8,726) rotate(-90)" text-anchor="end">10:30</text>
<text transform="translate(523.9,726) rotate(-90)" text-anchor="end">05.10.2017</text>
<text transform="translate(537.7,726) rotate(-90)" text-anchor="end">11:00</text>
<text transform="translate(560.8,726) rotate(-90)" text-anchor="end">05.10.2017</text>
<text transform="translate(574.6,726) rotate(-90)" text-anchor="end">11:30</text>
<text transform="translate(597.7,726) rotate(-90)" text-anchor="end">05.10.2017</text>
<text transform="translate(611.5,726) rotate(-90)" text-anchor="end">12:00</text>
<text transform="translate(634.6,726) rotate(-90)" text-anchor="end">05.10.2017</text>
<text transform="translate(648.4,726) rotate(-90)" text-anchor="end">12:30</text>
<text transform="translate(671.4,726) rotate(-90)" text-anchor="end">05.10.2017</text>
<text transform="translate(685.2,726) rotate(-90)" text-anchor="end">13:00</text>
<text transform="translate(708.3,726) rotate(-90)" text-anchor="end">05.10.2017</text>
<text transform="translate(722.1,726) rotate(-90)" text-anchor="end">13:30</text>
<text transform="translate(745.2,726) rotate(-90)" text-anchor="end">05.10.2017</text>
<text transform="translate(759.0,726) rotate(-90)" text-anchor="end">14:00</text>
<text transform="translate(782.1,726) rotate(-90)" text-anchor="end">05.10.2017</text>
<text transform="translate(795.9,726) rotate(-90)" text-anchor="end">14:30</text>
<text transform="translate(819.0,726) rotate(-90)" text-anchor="end">05.10.2017</text>
<text transform="translate(832.8,726) rotate(-90)" text-anchor="end">15:00</text>
<text transform="translate(855.9,726) rotate(-90)" text-anchor="end">05.10.2017</text>
<text transform="translate(869.7,726) rotate(-90)" text-anchor="end">15:30</text>
<text transform="translate(892.8,726) rotate(-90)" text-anchor="end">05.10.2017</text>
<text transform="translate(906.6,726) rotate(-90)" text-anchor="end">16:00</text>
<text transform="translate(929.7,726) rotate(-90)" text-anchor="end">05.10.2017</text>
<text transform="translate(943.5,726) rotate(-90)" text-anchor="end">16:30</text>
<text transform="translate(966.6,726) rotate(-90)" text-anchor="end">05.10.2017</text>
<text transform="translate(980.4,726) rotate(-90)" text-anchor="end">17:00</text>
<text transform="translate(1003.5,726) rotate(-90)" text-anchor="end">05.10.2017</text>
<text transform="translate(1017.2,726) rotate(-90)" text-anchor="end">17:30</text>
<text transform="translate(1040.3,726) rotate(-90)" text-anchor="end">05.10.2017</text>
<text transform="translate(1054.1,726) rotate(-90)" text-anchor="end">18:00</text>
<text transform="translate(1077.0,726) rotate(-90)" text-anchor="end">05.10.2017</text>
<text transform="translate(1090.8,726) rotate(-90)" text-anchor="end">18:30</text>
<text transform="translate(1114.1,726) rotate(-90)" text-anchor="end">05.10.2017</text>
<text transform="translate(1127.9,726) rotate(-90)" text-anchor="end">19:00</text>
<text transform="translate(1163,485) rotate(90)" font-size="11.2">Температура, °С</text>
</g>
<rect x="1218.5" y="363.5" width="246" height="176" fill="#fff" stroke="#000" stroke-width="1" shape-rendering="crispEdges"/>
<defs><filter id="sh" x="-20%" y="-20%" width="150%" height="170%"><feGaussianBlur in="SourceAlpha" stdDeviation="1.6"/><feOffset dx="2.5" dy="3"/><feComponentTransfer><feFuncA type="linear" slope="0.55"/></feComponentTransfer><feMerge><feMergeNode/><feMergeNode in="SourceGraphic"/></feMerge></filter></defs>
<g shape-rendering="crispEdges"><rect x="1222" y="368.0" width="12" height="12" fill="#fff"/><path d="M1222.5 380.0 V368.5 H1234" fill="none" stroke="#8c8c8c"/><path d="M1223.5 379.0 V369.5 H1233" fill="none" stroke="#5a5a5a"/><path d="M1223 379.5 H1233.5 V369.0" fill="none" stroke="#dcdcdc"/></g>
<path d="M1225.2 373.6 L1227.3 376.2 L1231.4 371.4" fill="none" stroke="#000" stroke-width="2"/>
<line x1="1239" y1="374.5" x2="1277" y2="374.5" stroke="#ff8a10" stroke-width="1.2"/>
<text x="1284" y="378.3" font-size="11.2">Уровень топлива (073032) (x1)</text>
<g shape-rendering="crispEdges"><rect x="1222" y="385.0" width="12" height="12" fill="#fff"/><path d="M1222.5 397.0 V385.5 H1234" fill="none" stroke="#8c8c8c"/><path d="M1223.5 396.0 V386.5 H1233" fill="none" stroke="#5a5a5a"/><path d="M1223 396.5 H1233.5 V386.0" fill="none" stroke="#dcdcdc"/></g>
<path d="M1225.2 390.6 L1227.3 393.2 L1231.4 388.4" fill="none" stroke="#000" stroke-width="2"/>
<line x1="1239" y1="391.5" x2="1277" y2="391.5" stroke="#3fa83f" stroke-width="1.2"/>
<text x="1284" y="395.3" font-size="11.2">Температура (073032)</text>
<g shape-rendering="crispEdges"><rect x="1222" y="402.0" width="12" height="12" fill="#fff"/><path d="M1222.5 414.0 V402.5 H1234" fill="none" stroke="#8c8c8c"/><path d="M1223.5 413.0 V403.5 H1233" fill="none" stroke="#5a5a5a"/><path d="M1223 413.5 H1233.5 V403.0" fill="none" stroke="#dcdcdc"/></g>
<path d="M1225.2 407.6 L1227.3 410.2 L1231.4 405.4" fill="none" stroke="#000" stroke-width="2"/>
<rect x="1239" y="402.0" width="37" height="12" fill="#ff00c0" filter="url(#sh)"/>
<text x="1284" y="412.3" font-size="11.2">Движение (073032)</text>
<g shape-rendering="crispEdges"><rect x="1222" y="419.0" width="12" height="12" fill="#fff"/><path d="M1222.5 431.0 V419.5 H1234" fill="none" stroke="#8c8c8c"/><path d="M1223.5 430.0 V420.5 H1233" fill="none" stroke="#5a5a5a"/><path d="M1223 430.5 H1233.5 V420.0" fill="none" stroke="#dcdcdc"/></g>
<line x1="1239" y1="425.5" x2="1277" y2="425.5" stroke="#2a10f0" stroke-width="1.2"/>
<text x="1284" y="429.3" font-size="11.2">Попадание в ямы (073032) (x1)</text>
<g shape-rendering="crispEdges"><rect x="1222" y="436.0" width="12" height="12" fill="#fff"/><path d="M1222.5 448.0 V436.5 H1234" fill="none" stroke="#8c8c8c"/><path d="M1223.5 447.0 V437.5 H1233" fill="none" stroke="#5a5a5a"/><path d="M1223 447.5 H1233.5 V437.0" fill="none" stroke="#dcdcdc"/></g>
<line x1="1239" y1="442.5" x2="1277" y2="442.5" stroke="#9a9ae6" stroke-width="1.2"/>
<text x="1284" y="446.3" font-size="11.2">Резкое ускорение (073032) (x1)</text>
<g shape-rendering="crispEdges"><rect x="1222" y="453.0" width="12" height="12" fill="#fff"/><path d="M1222.5 465.0 V453.5 H1234" fill="none" stroke="#8c8c8c"/><path d="M1223.5 464.0 V454.5 H1233" fill="none" stroke="#5a5a5a"/><path d="M1223 464.5 H1233.5 V454.0" fill="none" stroke="#dcdcdc"/></g>
<line x1="1239" y1="459.5" x2="1277" y2="459.5" stroke="#4a2a5a" stroke-width="1.2"/>
<text x="1284" y="463.3" font-size="11.2">Резкое торможение (073032) (x1)</text>
<g shape-rendering="crispEdges"><rect x="1222" y="470.0" width="12" height="12" fill="#fff"/><path d="M1222.5 482.0 V470.5 H1234" fill="none" stroke="#8c8c8c"/><path d="M1223.5 481.0 V471.5 H1233" fill="none" stroke="#5a5a5a"/><path d="M1223 481.5 H1233.5 V471.0" fill="none" stroke="#dcdcdc"/></g>
<line x1="1239" y1="476.5" x2="1277" y2="476.5" stroke="#e010d0" stroke-width="1.2"/>
<text x="1284" y="480.3" font-size="11.2">Резкий поворот (073032) (x1)</text>
<g shape-rendering="crispEdges"><rect x="1222" y="487.0" width="12" height="12" fill="#fff"/><path d="M1222.5 499.0 V487.5 H1234" fill="none" stroke="#8c8c8c"/><path d="M1223.5 498.0 V488.5 H1233" fill="none" stroke="#5a5a5a"/><path d="M1223 498.5 H1233.5 V488.0" fill="none" stroke="#dcdcdc"/></g>
<path d="M1254.5 489.7 L1262 489.7 L1258.2 497.3 Z" fill="#b446f2" stroke="#111" stroke-width="1"/>
<text x="1284" y="497.3" font-size="11.2">Опрокидывание (073032)</text>
<g shape-rendering="crispEdges"><rect x="1222" y="504.0" width="12" height="12" fill="#fff"/><path d="M1222.5 516.0 V504.5 H1234" fill="none" stroke="#8c8c8c"/><path d="M1223.5 515.0 V505.5 H1233" fill="none" stroke="#5a5a5a"/><path d="M1223 515.5 H1233.5 V505.0" fill="none" stroke="#dcdcdc"/></g>
<path d="M1225.2 509.6 L1227.3 512.2 L1231.4 507.4" fill="none" stroke="#000" stroke-width="2"/>
<line x1="1239" y1="510.5" x2="1277" y2="510.5" stroke="#7a1fb0" stroke-width="1.2"/>
<text x="1284" y="514.3" font-size="11.2">Угол тангажа (073032) (x5)</text>
<g shape-rendering="crispEdges"><rect x="1222" y="521.0" width="12" height="12" fill="#fff"/><path d="M1222.5 533.0 V521.5 H1234" fill="none" stroke="#8c8c8c"/><path d="M1223.5 532.0 V522.5 H1233" fill="none" stroke="#5a5a5a"/><path d="M1223 532.5 H1233.5 V522.0" fill="none" stroke="#dcdcdc"/></g>
<path d="M1225.2 526.6 L1227.3 529.2 L1231.4 524.4" fill="none" stroke="#000" stroke-width="2"/>
<line x1="1239" y1="527.5" x2="1277" y2="527.5" stroke="#1c3fe0" stroke-width="1.2"/>
<text x="1284" y="531.3" font-size="11.2">Угол крена (073032) (x4)</text>
</svg>
</body></html>
